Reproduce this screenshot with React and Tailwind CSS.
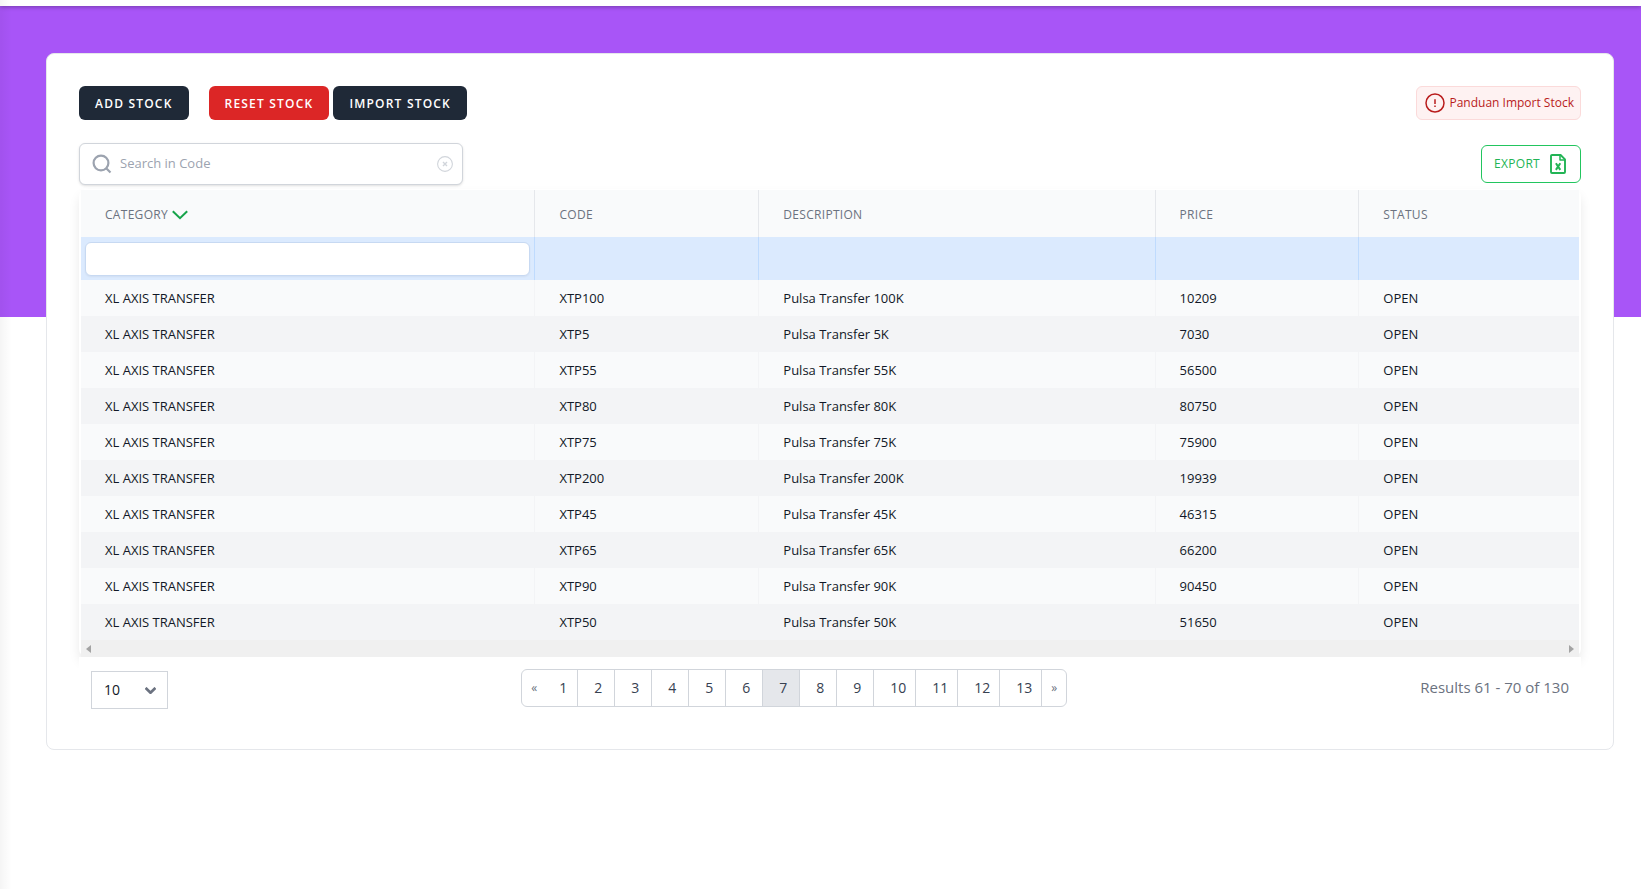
import React from "react";

const rows = [
  ["XTP100", "100K", "10209"],
  ["XTP5", "5K", "7030"],
  ["XTP55", "55K", "56500"],
  ["XTP80", "80K", "80750"],
  ["XTP75", "75K", "75900"],
  ["XTP200", "200K", "19939"],
  ["XTP45", "45K", "46315"],
  ["XTP65", "65K", "66200"],
  ["XTP90", "90K", "90450"],
  ["XTP50", "50K", "51650"],
].map(([code, size, price]) => ["XL AXIS TRANSFER", code, `Pulsa Transfer ${size}`, price, "OPEN"]);

const pages = [1, 2, 3, 4, 5, 6, 7, 8, 9, 10, 11, 12, 13];

function pageWidth(page) {
  if (page === 1) return "w-8 pl-[13px]";
  return page < 10 ? "w-[37px] pl-4" : "w-[42px] pl-4";
}

function SearchIcon() {
  return (
    <svg className="size-5 shrink-0 text-[#9ca3af]" viewBox="0 0 20 20" fill="none" stroke="currentColor" strokeWidth="2.2" aria-hidden="true">
      <circle cx="9" cy="9" r="7.4" />
      <path d="M14.2 14.2 18.5 18.5" />
    </svg>
  );
}

function ClearIcon() {
  return (
    <svg className="size-4" viewBox="0 0 16 16" fill="none" stroke="currentColor" strokeWidth="1.1" aria-hidden="true">
      <circle cx="8" cy="8" r="7.4" />
      <path d="M6 6 10 10M10 6 6 10" strokeWidth="1.4" />
    </svg>
  );
}

function AlertIcon() {
  return (
    <svg className="size-5" viewBox="0 0 20 20" fill="none" stroke="currentColor" strokeWidth="1.5" aria-hidden="true">
      <circle cx="10" cy="10" r="9" />
      <path d="M10 6.2v4.8M10 12.4v1.6" />
    </svg>
  );
}

function SpreadsheetIcon() {
  return (
    <svg className="h-5 w-4" viewBox="0 0 16 20" fill="none" stroke="currentColor" strokeWidth="1.9" strokeLinejoin="round" aria-hidden="true">
      <path d="M2 1h8.6L15 5.400V18a1 1 0 0 1-1 1H2a1 1 0 0 1-1-1V2a1 1 0 0 1 1-1z" />
      <path d="M10 1v4.900h5" strokeWidth="1.500" />
      <path d="M5.900 9.300 10.300 15.900M10.300 9.300 5.900 15.900" strokeWidth="2" />
    </svg>
  );
}

function Chevron({ className }) {
  return (
    <svg className={className} viewBox="0 0 16 10" fill="none" stroke="currentColor" aria-hidden="true">
      <path d="M.8 1.200 8 8.200 15.200 1.200" />
    </svg>
  );
}

const solidButton = "h-[34px] rounded-md px-4 pt-px text-xs font-semibold tracking-widest text-white";

export default function App() {
  return (
    <div className="relative min-h-screen bg-white font-['Open_Sans','Noto_Sans',sans-serif] text-[#111827]">
      <header className="relative h-[6px] bg-white shadow-[0_1px_4px_rgba(0,0,0,0.3)]" />
      <div className="h-[311px] bg-[#a855f7]" />
      <div className="pointer-events-none absolute inset-y-0 left-0 w-3 bg-linear-to-r from-black/4 to-transparent" />

      <main className="relative -mt-[264px] mr-[27px] ml-[46px] rounded-lg border border-[#e5e7eb] bg-white px-8 pt-8 pb-10">
        <div className="flex items-center justify-between">
          <div className="flex">
            <button type="button" className={`${solidButton} mr-5 bg-[#1f2937]`}>ADD STOCK</button>
            <button type="button" className={`${solidButton} mr-1 bg-[#dc2626]`}>RESET STOCK</button>
            <button type="button" className={`${solidButton} bg-[#1f2937]`}>IMPORT STOCK</button>
          </div>
          <button type="button" className="flex h-[34px] items-center gap-1 rounded-md border border-[#fbdada] bg-[#fef2f2] pr-[6px] pl-2 text-xs font-medium text-[#b91c1c]">
            <AlertIcon />
            Panduan Import Stock
          </button>
        </div>

        <div className="mt-[23px] flex items-center justify-between">
          <div className="flex h-[42px] w-[384px] items-center rounded-md border border-[#d1d5db] bg-white pr-[9px] pl-3 shadow-sm">
            <SearchIcon />
            <input type="text" aria-label="Search in Code" placeholder="Search in Code" className="ml-2 min-w-0 flex-1 bg-transparent text-[13px] outline-none placeholder:text-[#9ca3af]" />
            <button type="button" aria-label="Clear search" className="text-[#d1d5db]">
              <ClearIcon />
            </button>
          </div>
          <button type="button" className="flex h-[38px] items-center gap-[10px] rounded-md border border-[#22c55e] bg-white pr-[14px] pl-3 text-xs font-medium tracking-wide text-[#22b455]">
            EXPORT
            <SpreadsheetIcon />
          </button>
        </div>

        <div className="mt-1 rounded-lg px-[2px] pt-px shadow-[0_6px_12px_-1px_rgba(0,0,0,0.1)]">
          <table className="w-full table-fixed border-collapse text-left">
            <colgroup>
              <col className="w-[30.3%]" />
              <col className="w-[14.95%]" />
              <col className="w-[26.45%]" />
              <col className="w-[13.6%]" />
              <col />
            </colgroup>
            <thead>
              <tr className="h-[47px] bg-[#f9fafb] text-xs text-[#6b7280]">
                {["CATEGORY", "CODE", "DESCRIPTION", "PRICE", "STATUS"].map((name, i) => (
                  <th key={name} scope="col" className="border-r border-[#e5e7eb] px-6 pt-[2px] font-medium tracking-wide last:border-r-0">
                    <span className="flex items-center gap-1">
                      {name}
                      {i === 0 && <Chevron className="h-[10px] w-4 stroke-2 text-[#16a34a]" />}
                    </span>
                  </th>
                ))}
              </tr>
              <tr className="h-[43px] bg-[#dbeafe]">
                <td className="border-r border-[#bfdbfe] px-1">
                  <input type="text" aria-label="Filter by category" className="block h-[34px] w-full rounded-md border border-[#c7d9f2] bg-white px-3 text-sm shadow-xs outline-none" />
                </td>
                <td className="border-r border-[#bfdbfe]" />
                <td className="border-r border-[#bfdbfe]" />
                <td className="border-r border-[#bfdbfe]" />
                <td />
              </tr>
            </thead>
            <tbody className="text-[13px] leading-5">
              {rows.map((row) => (
                <tr key={row[1]} className="h-9 odd:bg-[#f9fafb] even:bg-[#f3f4f6]">
                  {row.map((cell, i) => (
                    <td key={i} className="border-r border-[#f3f4f6] px-6 last:border-r-0">{cell}</td>
                  ))}
                </tr>
              ))}
            </tbody>
          </table>
          <div className="flex h-[17px] items-center justify-between bg-[#f0f0f0] px-[5px] text-[#a3a3a3]" aria-hidden="true">
            <svg className="h-2 w-[5px]" viewBox="0 0 5 8" fill="currentColor"><path d="M5 0v8L0 4z" /></svg>
            <svg className="h-2 w-[5px]" viewBox="0 0 5 8" fill="currentColor"><path d="M0 0v8l5-4z" /></svg>
          </div>
        </div>

        <div className="relative flex items-end justify-between bg-white px-3 pt-3">
          <div className="relative">
            <select aria-label="Rows per page" defaultValue="10" className="block h-[38px] w-[77px] appearance-none border border-[#d1d5db] bg-white pl-3 text-sm">
              <option>10</option>
              <option>25</option>
              <option>50</option>
            </select>
            <Chevron className="pointer-events-none absolute top-4 right-3 h-[7px] w-[11px] stroke-4 text-[#6b7280]" />
          </div>
          <nav aria-label="Pagination" className="mb-[2px] flex h-[38px] overflow-hidden rounded-md border border-[#d1d5db] text-sm font-medium text-[#374151]">
            <button type="button" aria-label="Previous page" className="w-6 text-xs text-[#6b7280]">«</button>
            {pages.map((page) => (
              <button
                key={page}
                type="button"
                aria-current={page === 7 ? "page" : undefined}
                className={`border-r border-[#d1d5db] text-left ${pageWidth(page)} ${page === 7 ? "bg-[#e5e7eb]" : "bg-white"}`}
              >
                {page}
              </button>
            ))}
            <button type="button" aria-label="Next page" className="w-6 text-xs text-[#6b7280]">»</button>
          </nav>
          <p className="mb-[10px] text-[15px] leading-6 text-[#6b7280]">Results 61 - 70 of 130</p>
        </div>
      </main>
    </div>
  );
}
